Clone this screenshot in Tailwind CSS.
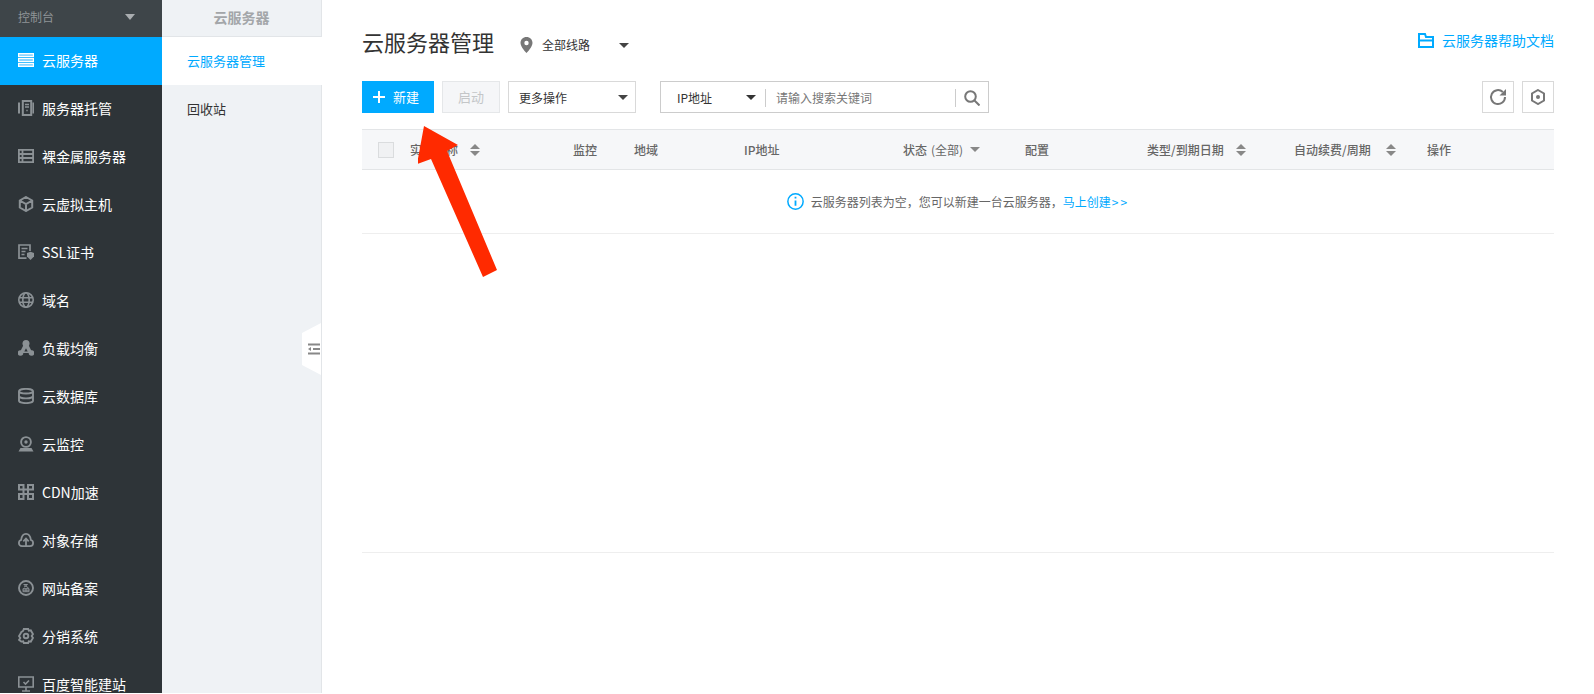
<!doctype html>
<html lang="zh"><head><meta charset="utf-8">
<script src="https://cdn.jsdelivr.net/npm/@tailwindcss/browser@4"></script>
</head>
<body class="bg-white">
<div class="relative flex h-[693px] w-[1594px] overflow-hidden bg-white font-['Noto_Sans_CJK_SC','Noto_Sans',sans-serif] text-[13px]">
  <aside class="w-[162px] shrink-0 bg-[#2e3438] text-white">
    <div class="flex h-[37px] items-center justify-between bg-[#3e4549] pb-[3px] pl-[18px] pr-[27px] text-xs text-[#8f9497]">控制台<span class="h-0 w-0 border-x-[5px] border-t-[6px] border-x-transparent border-t-[#a9adb0]"></span></div>
    <nav class="text-sm leading-[18px]">
      <a class="flex h-12 items-center gap-[8px] bg-[#00aaff] pb-[2px] pl-[18px]"><svg class="size-4" viewBox="0 0 16 16" fill="#8fd6ff" stroke="#fff" stroke-width="1.200"><path d="M.6 1.600h14.800v3H.6zM.6 6.500h14.800v3H.6zM.6 11.400h14.800v3H.6z"/></svg>云服务器</a>
      <a class="flex h-12 items-center gap-[8px] pb-[2px] pl-[18px]"><svg class="size-4" viewBox="0 0 16 16" fill="none" stroke="#8b9195" stroke-width="2"><path d="M1 2.500v11M4.800 1h8.400v14H4.800zM15.500 2.500v11" /><path stroke-width="1.300" d="M7 4.500h4M7 7h4M8.300 10.500h1.400"/></svg>服务器托管</a>
      <a class="flex h-12 items-center gap-[8px] pb-[2px] pl-[18px]"><svg class="size-4" viewBox="0 0 16 16" fill="none" stroke="#8b9195" stroke-width="1.800"><path d="M.9 1.900h14.200v12.200H.9zM4.500 1.900v12.200M.9 6h14.200M.9 10h14.200"/></svg>裸金属服务器</a>
      <a class="flex h-12 items-center gap-[8px] pb-[2px] pl-[18px]"><svg class="size-4" viewBox="0 0 16 16" fill="none" stroke="#8b9195" stroke-width="2"><path d="M8 1l6.200 3.500v7L8 15l-6.200-3.500v-7zM1.800 4.500L8 8l6.200-3.500M8 8v7"/></svg>云虚拟主机</a>
      <a class="flex h-12 items-center gap-[8px] pb-[2px] pl-[18px]"><svg class="size-4" viewBox="0 0 16 16" fill="none" stroke="#8b9195" stroke-width="1.700"><path d="M8.500 14.200H1V1h11v6M3.500 4.500h6M3.500 7.500h4M3.500 10.500h3"/><path fill="#8b9195" stroke="none" d="M9 9l3.500-1.200L16 9v3.500L12.500 16 9 12.500z"/></svg>SSL证书</a>
      <a class="flex h-12 items-center gap-[8px] pb-[2px] pl-[18px]"><svg class="size-4" viewBox="0 0 16 16" fill="none" stroke="#8b9195" stroke-width="1.600"><circle cx="8" cy="8" r="7.200"/><ellipse cx="8" cy="8" rx="3.200" ry="7.200"/><path d="M1 5.700h14M1 10.300h14"/></svg>域名</a>
      <a class="flex h-12 items-center gap-[8px] pb-[2px] pl-[18px]"><svg class="size-4" viewBox="0 0 16 16" fill="#8b9195"><circle cx="8" cy="3.500" r="3.500"/><circle cx="2.500" cy="13" r="2.800"/><circle cx="13.500" cy="13" r="2.800"/><path d="M5.500 5L2.500 11l2.500 2h6l2.500-2-3-6z"/><path fill="#2e3438" d="M6.300 11.500h3.400L8 8.300z"/></svg>负载均衡</a>
      <a class="flex h-12 items-center gap-[8px] pb-[2px] pl-[18px]"><svg class="size-4" viewBox="0 0 16 16" fill="none" stroke="#8b9195" stroke-width="1.900"><ellipse cx="8" cy="3.200" rx="7" ry="2.300"/><path d="M1 3.200v9.600C1 14.100 4 15.100 8 15.100s7-1 7-2.300V3.200M1 8c0 1.300 3 2.400 7 2.400s7-1.100 7-2.400"/></svg>云数据库</a>
      <a class="flex h-12 items-center gap-[8px] pb-[2px] pl-[18px]"><svg class="size-4" viewBox="0 0 16 16" fill="none" stroke="#8b9195" stroke-width="1.900"><circle cx="8" cy="6" r="4.900"/><circle cx="8" cy="6" r="1.700" fill="#8b9195" stroke="none"/><path d="M.5 15.500h15l-2-3.500h-11z" fill="#8b9195" stroke="none"/></svg>云监控</a>
      <a class="flex h-12 items-center gap-[8px] pb-[2px] pl-[18px]"><svg class="size-4" viewBox="0 0 16 16" fill="none" stroke="#8b9195" stroke-width="2"><path d="M1 1h4.500v4.500H1zM10 1h5v4.500h-5zM1 10h4.500v5H1zM10 10h5v5h-5zM5.500 5.500h4.500v4.500H5.500z"/></svg>CDN加速</a>
      <a class="flex h-12 items-center gap-[8px] pb-[2px] pl-[18px]"><svg class="size-4" viewBox="0 0 16 16" fill="none" stroke="#8b9195" stroke-width="1.800"><path d="M4 14.200C2 14.200.9 12.700.9 11c0-1.500 1-2.700 2.200-3C3.600 4.300 5.500 1.800 8 1.800s4.400 2.500 4.900 6.200c1.200.3 2.200 1.500 2.200 3 0 1.700-1.100 3.200-3.100 3.200zM8 14V7M5.300 9.300L8 6.500l2.700 2.800"/></svg>对象存储</a>
      <a class="flex h-12 items-center gap-[8px] pb-[2px] pl-[18px]"><svg class="size-4" viewBox="0 0 16 16" fill="none" stroke="#8b9195" stroke-width="1.900"><circle cx="8" cy="8" r="7"/><path stroke-width="1" d="M5.500 4.500h4L6 7.200M6.500 5.500l4 2.300M5 8.700h6v3H5zM5 10.200h6M8 8.700v3"/></svg>网站备案</a>
      <a class="flex h-12 items-center gap-[8px] pb-[2px] pl-[18px]"><svg class="size-4" viewBox="0 0 16 16" fill="none" stroke="#8b9195" stroke-width="1.900"><path d="M5.800 1h4.400l.6 1.700 2-.3 2.200 3.700-1.300 1.900 1.300 1.900-2.200 3.700-2-.3-.6 1.700H5.800l-.6-1.700-2 .3L1 11.900 2.300 10 1 8.100l2.200-3.700-.1-.1 2.100-1.600z"/><circle cx="8" cy="8" r="2.300"/></svg>分销系统</a>
      <a class="flex h-12 items-center gap-[8px] pb-[2px] pl-[18px]"><svg class="size-4" viewBox="0 0 16 16" fill="none" stroke="#8b9195" stroke-width="1.600"><path d="M.8 1h14.400v10H.8zM8 11v3.500M4 15h8M5.500 6l2 2 3.500-3.500"/></svg>百度智能建站</a>
    </nav>
  </aside>

  <div class="relative w-[160px] shrink-0 border-r border-r-[#e2e5e8] bg-[#eff2f5] text-[13px]">
    <div class="flex h-[37px] items-center justify-center border-b border-b-[#e2e5e8] pb-[2px] text-sm font-bold text-[#a3a6a9]">云服务器</div>
    <a class="-mr-px flex h-12 items-center bg-white pb-px pl-[25px] text-[13px] text-[#00aaff]">云服务器管理</a>
    <a class="flex h-12 items-center pb-px pl-[25px] text-[13px] text-[#333]">回收站</a>
    <div class="absolute right-0 top-[323px] flex h-[52px] w-[19px] items-center justify-end bg-white pr-[1px] [clip-path:polygon(0_10px,100%_0,100%_100%,0_42px)]"><svg class="size-3" viewBox="0 0 12 12" fill="none" stroke="#888" stroke-width="1.800"><path d="M0 1.500h12M5 6h7M0 10.500h12"/><path fill="#888" stroke="none" d="M3 4v4L0 6z"/></svg></div>
  </div>

  <main class="min-w-0 flex-1 pl-[40px] pr-[40px]">
    <div class="flex h-[81px] items-start">
      <h1 class="mt-[26px] text-[22px] leading-[30px] text-[#333]">云服务器管理</h1>
      <div class="ml-[26px] mt-[37px] flex items-center text-xs text-[#333]"><svg class="mr-[9px] h-[16px] w-[13px]" viewBox="0 0 13 16" fill="#777"><path fill-rule="evenodd" d="M6.500 0C3 0 .5 2.600.5 6c0 4 6 10 6 10s6-6 6-10C12.500 2.600 10 0 6.500 0zm0 8.200a2.200 2.200 0 110-4.400 2.200 2.200 0 010 4.400z"/></svg>全部线路<span class="ml-[29px] h-0 w-0 border-x-[5px] border-t-[5px] border-x-transparent border-t-[#444]"></span></div>
      <a class="ml-auto mt-[30px] flex items-center gap-[8px] text-sm text-[#00aaff]"><svg class="h-[15px] w-[16px]" viewBox="0 0 16 15" fill="none" stroke="#00aaff" stroke-width="2"><path d="M1 1h6l1 3h7v10H1zM1 7.500h14"/></svg>云服务器帮助文档</a>
    </div>
    <div class="flex h-[32px] items-stretch text-xs">
      <button class="flex w-[72px] items-center gap-[8px] bg-[#00aaff] pl-[11px] text-[13px] text-white"><svg class="size-3" viewBox="0 0 12 12" stroke="#fff" stroke-width="2"><path d="M6 0v12M0 6h12"/></svg>新建</button>
      <button class="ml-2 w-[58px] border border-[#e5e7e9] bg-[#f5f6f8] text-[13px] text-[#c4c6c8]">启动</button>
      <div class="ml-2 flex w-[128px] items-center justify-between border border-[#d9d9d9] pl-[10px] pr-[7px] pt-px text-[#333]">更多操作<span class="h-0 w-0 border-x-[5px] border-t-[5px] border-x-transparent border-t-[#444]"></span></div>
      <div class="ml-6 flex w-[329px] items-center border border-[#cccccc] pt-px text-[#333]">
        <div class="flex h-[18px] w-[105px] items-center justify-between border-r border-r-[#ccc] pl-[16px] pr-[9px]">IP地址<span class="h-0 w-0 border-x-[5px] border-t-[5px] border-x-transparent border-t-[#333]"></span></div>
        <span class="ml-[10px] flex-1 text-[#777]">请输入搜索关键词</span>
        <div class="flex h-[18px] w-[33px] items-center justify-center border-l border-l-[#ccc]"><svg class="size-4" viewBox="0 0 16 16" fill="none" stroke="#777" stroke-width="2"><circle cx="6.500" cy="6.500" r="5.300"/><path d="M10.500 10.500l5 5"/></svg></div>
      </div>
      <div class="ml-auto flex gap-2">
        <button class="flex w-[32px] items-center justify-center border border-[#d9d9d9]"><svg class="size-[18px]" viewBox="0 0 18 18" fill="none" stroke="#777" stroke-width="2"><path d="M16 9a7 7 0 11-2.200-5"/><path fill="#777" stroke="none" d="M17 1v6.500h-6.500z"/></svg></button>
        <button class="flex w-[32px] items-center justify-center border border-[#d9d9d9]"><svg class="size-4" viewBox="0 0 16 16" fill="none" stroke="#777" stroke-width="2"><path d="M8 1l6 3.500v7L8 15l-6-3.500v-7z"/><circle cx="8" cy="8" r="2" fill="#777" stroke="none"/></svg></button>
      </div>
    </div>
    <div class="mt-4 flex h-[41px] items-center border-y border-y-[#e3e5e7] bg-[#f6f7f9] text-xs font-medium text-[#666]">
      <span class="ml-4 size-4 border border-[#dadcde] bg-[#f0f1f3]"></span>
      <span class="ml-4 flex w-[163px] items-center">实例名称<span class="ml-[12px] flex flex-col gap-[2px]"><i class="h-0 w-0 border-x-[5px] border-b-[5px] border-x-transparent border-b-[#888]"></i><i class="h-0 w-0 border-x-[5px] border-t-[5px] border-x-transparent border-t-[#888]"></i></span></span>
      <span class="w-[61px]">监控</span>
      <span class="w-[110px]">地域</span>
      <span class="w-[159px]">IP地址</span>
      <span class="flex w-[122px] items-center">状态 <span class="ml-1 font-normal">(全部)</span><i class="ml-[7px] h-0 w-0 border-x-[5px] border-t-[5px] border-x-transparent border-t-[#888]"></i></span>
      <span class="w-[122px]">配置</span>
      <span class="flex w-[147px] items-center">类型/到期日期<span class="ml-[12px] flex flex-col gap-[2px]"><i class="h-0 w-0 border-x-[5px] border-b-[5px] border-x-transparent border-b-[#888]"></i><i class="h-0 w-0 border-x-[5px] border-t-[5px] border-x-transparent border-t-[#888]"></i></span></span>
      <span class="flex w-[133px] items-center">自动续费/周期<span class="ml-[15px] flex flex-col gap-[2px]"><i class="h-0 w-0 border-x-[5px] border-b-[5px] border-x-transparent border-b-[#888]"></i><i class="h-0 w-0 border-x-[5px] border-t-[5px] border-x-transparent border-t-[#888]"></i></span></span>
      <span>操作</span>
    </div>
    <div class="flex h-[64px] items-center justify-center border-b border-b-[#eeeeee] text-xs text-[#666]"><svg class="mr-[7px] size-[17px]" viewBox="0 0 16 16" fill="none" stroke="#00aaff" stroke-width="1.400"><circle cx="8" cy="8" r="7.200"/><path stroke-width="1.700" d="M8 7v5M8 3.500v1.700"/></svg>云服务器列表为空，您可以新建一台云服务器，<a class="text-[#00aaff]">马上创建<span class="ml-px tracking-[2px]">&gt;&gt;</span></a></div>
    <div class="mt-[318px] border-b border-b-[#eeeeee]"></div>
  </main>

  <svg class="absolute left-[418px] top-[125px] h-[155px] w-[80px]" viewBox="418 125 80 155"><path fill="#ff2a00" d="M424 126L458 145 447 151 497 270 483 277 431 159 417 164z"/></svg>
</div>
</body></html>
